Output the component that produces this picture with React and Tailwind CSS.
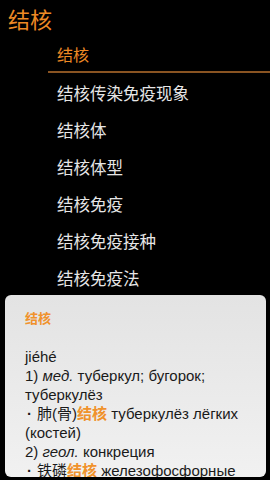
import React from 'react'

const items = ['结核传染免疫现象', '结核体', '结核体型', '结核免疫', '结核免疫接种', '结核免疫法']

const Hl = ({ children }) => <span className="font-bold text-[#f0922c]">{children}</span>

const Dot = () => <span className="ml-[2px] mr-[5px] font-bold">·</span>

export default function App() {
  return (
    <div
      className="relative w-[270px] h-[480px] overflow-hidden bg-black"
      style={{ fontFamily: '"Liberation Sans", "Noto Sans CJK SC", sans-serif' }}
    >
      {/* Header */}
      <div className="pl-[8px] pt-[7px] text-[22px] leading-[28px] text-[#ee8a25]">结核</div>

      {/* Suggestions */}
      <div className="ml-[48px] mt-[6px]">
        <div className="h-[32px] pl-[9px] flex items-center text-[16px] text-[#ee8a25] border-b-2 border-[#8a5422]">
          结核
        </div>
        <div className="pt-[3px]">
          {items.map((t) => (
            <div key={t} className="h-[37px] pl-[9px] flex items-center text-[16.5px] text-[#e6e6e6]">
              {t}
            </div>
          ))}
        </div>
      </div>

      {/* Popup card */}
      <div className="absolute left-[5px] top-[295px] w-[261px] h-[182px] overflow-hidden rounded-[6px] bg-gradient-to-b from-[#e3e3e3] to-[#f1f1f1] pl-[20px] pr-[8px] pt-[14px] text-[15px] leading-[19px] text-[#1a1a1a]">
        <div className="mb-[19px] text-[13px] font-bold text-[#f0922c]">结核</div>
        <div>jiéhé</div>
        <div>
          1) <i>мед.</i> туберкул; бугорок; туберкулёз
        </div>
        <div>
          <Dot />肺(骨)<Hl>结核</Hl> туберкулёз лёгких (костей)
        </div>
        <div>
          2) <i>геол.</i> конкреция
        </div>
        <div>
          <Dot />铁磷<Hl>结核</Hl> железофосфорные
        </div>
      </div>
    </div>
  )
}
